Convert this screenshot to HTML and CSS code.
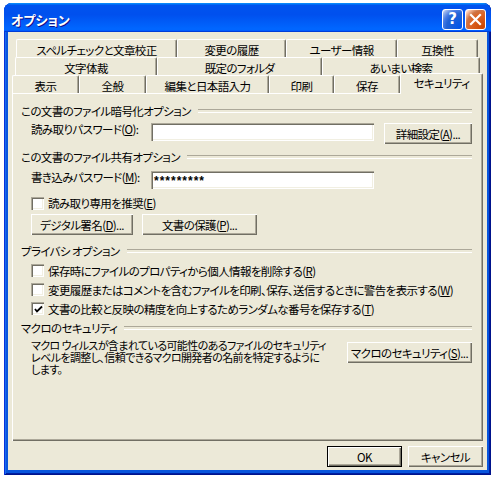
FILE: index.html
```html
<!DOCTYPE html>
<html lang="ja">
<head>
<meta charset="utf-8">
<title>オプション</title>
<link rel="stylesheet" href="styles.css">
</head>
<body>
<div class="window">
  <div class="titlebar">
    <span class="title">オプション</span>
    <div class="controls">
      <span class="ctl help">?</span>
      <span class="ctl close"><svg width="19" height="19" viewBox="0 0 19 19"><path d="M5 5 L14 14 M14 5 L5 14" stroke="#fff" stroke-width="2.2" stroke-linecap="square"/></svg></span>
    </div>
  </div>
  <div class="client">
    <div class="tabs">
      <div class="tabrow row1">
        <div class="tab t-spell">スペルチェックと文章校正</div>
        <div class="tab t-track">変更の履歴</div>
        <div class="tab t-user">ユーザー情報</div>
        <div class="tab t-compat">互換性</div>
      </div>
      <div class="tabrow row2">
        <div class="tab t-type">文字体裁</div>
        <div class="tab t-folder">既定のフォルダ</div>
        <div class="tab t-fuzzy">あいまい検索</div>
      </div>
      <div class="tabrow row3">
        <div class="tab t-view">表示</div>
        <div class="tab t-general">全般</div>
        <div class="tab t-edit">編集と日本語入力</div>
        <div class="tab t-print">印刷</div>
        <div class="tab t-save">保存</div>
        <div class="tab selected t-sec">セキュリティ</div>
      </div>
    </div>
    <div class="panel">
      <div class="gh">この文書のファイル暗号化オプション</div>
      <div class="field f1">
        <span class="lbl">読み取りパスワード(<u>O</u>):</span>
        <span class="textbox"></span>
        <button class="btn b-adv">詳細設定(<u>A</u>)...</button>
      </div>
      <div class="gh g2">この文書のファイル共有オプション</div>
      <div class="field f2">
        <span class="lbl">書き込みパスワード(<u>M</u>):</span>
        <span class="textbox"><span class="pw">*********</span></span>
      </div>
      <div class="chk c-ro"><span class="cb"></span><span>読み取り専用を推奨(<u>E</u>)</span></div>
      <div class="btnrow">
        <button class="btn b-sig">デジタル署名(<u>D</u>)...</button>
        <button class="btn b-prot">文書の保護(<u>P</u>)...</button>
      </div>
      <div class="gh g3">プライバシ オプション</div>
      <div class="chklist">
        <div class="chk"><span class="cb"></span><span>保存時にファイルのプロパティから個人情報を削除する(<u>R</u>)</span></div>
        <div class="chk"><span class="cb"></span><span>変更履歴またはコメントを含むファイルを印刷、保存、送信するときに警告を表示する(<u>W</u>)</span></div>
        <div class="chk"><span class="cb checked"><svg width="9" height="9" viewBox="0 0 9 9"><path d="M1 4 L3 6.5 L8 1.5" stroke="#000" stroke-width="1.8" fill="none"/></svg></span><span>文書の比較と反映の精度を向上するためランダムな番号を保存する(<u>T</u>)</span></div>
      </div>
      <div class="gh g4">マクロのセキュリティ</div>
      <div class="macro">
        <p class="para">マクロ ウィルスが含まれている可能性のあるファイルのセキュリティ<br>レベルを調整し、信頼できるマクロ開発者の名前を特定するように<br>します。</p>
        <button class="btn b-macro">マクロのセキュリティ(<u>S</u>)...</button>
      </div>
    </div>
    <div class="footer">
      <button class="btn default">OK</button>
      <button class="btn">キャンセル</button>
    </div>
  </div>
</div>
</body>
</html>
```

FILE: styles.css
```css
* { box-sizing: border-box; }
html, body { margin: 0; padding: 0; background: #fff; }
body {
  font-family: "Noto Sans CJK JP", "Noto Sans", sans-serif;
  font-size: 11.5px;
  color: #000;
  font-feature-settings: "palt";
  letter-spacing: -0.6px;
}
u { text-decoration: underline; text-underline-offset: 1px; }

.window {
  margin: 3px 0 0 4px;
  width: 487px;
  height: 472px;
  border-radius: 8px 8px 0 0;
  background: #0855DD;
  padding: 0 4px 5px 4px;
  display: flex;
  flex-direction: column;
  box-shadow: inset 1px 0 #0831D9, inset -1px 0 #00138C, inset 0 -1px #00138C, inset 2px 0 #166AEE, inset -2px -2px #001EA0;
}

.titlebar {
  height: 29px;
  margin: 0 -4px;
  padding: 0 5px 0 7px;
  display: flex;
  align-items: center;
  border-radius: 8px 8px 0 0;
  background: linear-gradient(180deg, #0997ff, #0053ee 8%, #0050ee 40%, #0066ff 88%, #0066ff 93%, #005bff 95%, #003dd7 96%, #003dd7);
}
.title {
  flex: 1;
  color: #fff;
  font-weight: bold;
  font-size: 13px;
  letter-spacing: 0;
  text-shadow: 1px 1px #0F1089;
  padding-top: 3px;
}
.controls { display: flex; gap: 2px; padding-top: 3px; }
.ctl {
  width: 21px;
  height: 21px;
  border: 1px solid #fff;
  border-radius: 3px;
  display: flex;
  align-items: center;
  justify-content: center;
}
.help {
  background: radial-gradient(circle at 90% 90%, #0054e9 0, #2263d5 55%, #4479e4 70%, #a3bbec 90%, #fff 100%);
  color: #fff;
  font-family: "DejaVu Sans", sans-serif;
  font-weight: bold;
  font-size: 15px;
  letter-spacing: 0;
}
.close {
  background: radial-gradient(circle at 90% 90%, #cc4600 0, #dc6527 55%, #cd7546 70%, #ffccb2 90%, #fff 100%);
}

.client {
  flex: 1;
  background: #ECE9D8;
  display: flex;
  flex-direction: column;
}

.tabs { padding-top: 7px; }
.tabrow { display: flex; height: 18px; }
.row1 { margin-left: 8px; }
.row2 { margin-left: 7px; }
.row3 { margin-left: 4px; }
.tab {
  height: 18px;
  line-height: 18px;
  padding-top: 1px;
  text-align: center;
  white-space: nowrap;
  background: #ECE9D8;
  border-top: 1px solid #fff;
  border-left: 1px solid #fff;
  border-right: 1px solid #716F64;
  border-radius: 2px 2px 0 0;
  box-shadow: inset -1px 0 #ACA899;
}
.t-spell { width: 161px; }
.t-track { width: 109px; }
.t-user { width: 111px; }
.t-compat { width: 81px; }
.t-type { width: 142px; }
.t-folder { width: 165px; }
.t-fuzzy { width: 158px; }
.t-view { width: 67px; }
.t-general { width: 67px; }
.t-edit { width: 123px; }
.t-print { width: 65px; }
.t-save { width: 66px; }
.t-sec { width: 83px; }
.tab.selected {
  position: relative;
  z-index: 1;
  height: 21px;
  margin-top: -2px;
  padding-top: 0;
  line-height: 19px;
}

.panel {
  margin-left: 4px;
  width: 471px;
  height: 348px;
  padding: 11px 11px 0 9px;
  display: flex;
  flex-direction: column;
  box-shadow: inset 1px 1px #fff, inset -1px -1px #716F64, inset -2px -2px #ACA899;
}

.gh {
  display: flex;
  align-items: center;
  height: 14px;
  line-height: 14px;
  white-space: nowrap;
}
.gh::after {
  content: "";
  flex: 1;
  height: 2px;
  margin-left: 7px;
  border-top: 1px solid #ACA899;
  border-bottom: 1px solid #fff;
}
.g2 { margin-top: 6px; }
.g3 { margin-top: 9px; }
.g4 { margin-top: 3px; }

.field {
  display: flex;
  align-items: flex-start;
  padding-left: 10px;
  white-space: nowrap;
}
.f1 { margin-top: 5px; height: 21px; }
.f2 { margin-top: 7px; height: 18px; }
.lbl { width: 120px; line-height: 13px; }
.textbox {
  width: 223px;
  height: 18px;
  background: #fff;
  box-shadow: inset 1px 1px #ACA899, inset 2px 2px #716F64, inset -1px -1px #fff, inset -2px -2px #F1EFE2;
  padding: 2px 0 0 3px;
  line-height: 14px;
}
.pw { font-weight: bold; letter-spacing: 1px; font-family: "Liberation Sans", sans-serif; font-size: 12px; }

.btn {
  border: none;
  margin: 0;
  padding: 0;
  font: inherit;
  letter-spacing: inherit;
  color: #000;
  background: #ECE9D8;
  height: 21px;
  text-align: center;
  white-space: nowrap;
  box-shadow: inset 1px 1px #fff, inset -1px -1px #716F64, inset -2px -2px #ACA899;
}
.b-adv { margin-left: 10px; width: 88px; }

.chk {
  display: flex;
  align-items: center;
  padding-left: 10px;
  height: 19px;
  white-space: nowrap;
}
.c-ro { margin-top: 7px; height: 14px; }
.cb {
  width: 13px;
  height: 13px;
  margin-right: 4px;
  flex: none;
  background: #fff;
  box-shadow: inset 1px 1px #ACA899, inset 2px 2px #716F64, inset -1px -1px #fff, inset -2px -2px #F1EFE2;
  display: flex;
  align-items: center;
  justify-content: center;
}
.checked svg { margin: 1px 0 0 1px; }

.btnrow { display: flex; gap: 9px; padding-left: 10px; margin-top: 4px; }
.b-sig { width: 102px; }
.b-prot { width: 115px; }

.chklist { margin-top: 3px; }

.macro {
  display: flex;
  align-items: flex-start;
  padding-left: 10px;
  margin-top: 4px;
}
.para {
  width: 316px;
  flex: none;
  margin: 0;
  font-size: 11px;
  line-height: 12px;
  white-space: nowrap;
}
.b-macro { width: 125px; margin-top: 3px; }

.footer {
  display: flex;
  justify-content: flex-end;
  gap: 6px;
  margin-top: 5px;
  padding-right: 4px;
}
.footer .btn { width: 75px; }
.btn.default {
  border: 1px solid #000;
  box-shadow: inset 1px 1px #fff, inset -1px -1px #716F64, inset -2px -2px #ACA899;
}
```
